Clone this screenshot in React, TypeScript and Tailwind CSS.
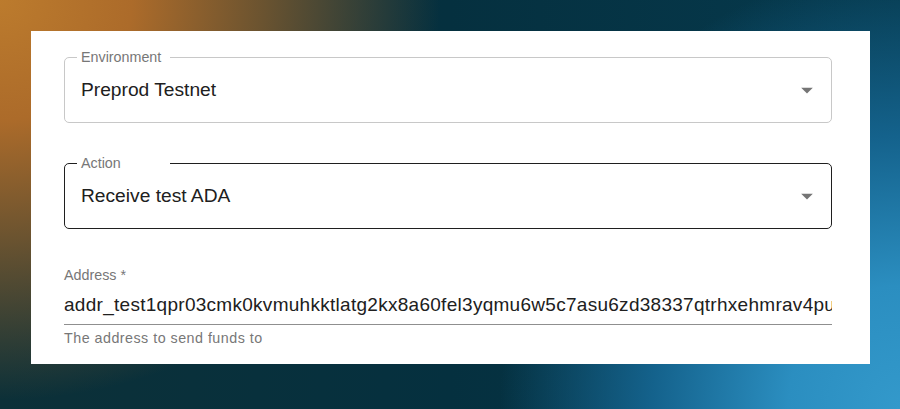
import { type ReactNode } from 'react'

const font = "font-['Liberation_Sans',Arial,sans-serif]"

function ArrowDrop() {
  return (
    <svg viewBox="0 0 24 24" className="h-[28px] w-[28px] shrink-0 fill-[#757575]">
      <path d="M7 10l5 5 5-5z" />
    </svg>
  )
}

function OutlinedSelect({ label, value, active, className }: { label: string; value: string; active?: boolean; className?: string }) {
  return (
    <div
      className={`relative flex h-[66px] items-center justify-between rounded-[5px] border pl-[16px] pr-[10px] ${
        active ? 'border-[#1f1f1f]' : 'border-[#c8c8c8]'
      } ${className ?? ''}`}
    >
      <span className="absolute -top-[9px] left-[12px] h-[17px] w-[93px] bg-white pl-[4px] text-[14.3px] leading-[17px] text-[#777]">
        {label}
      </span>
      <span className="text-[19.2px] text-[#202020]">{value}</span>
      <ArrowDrop />
    </div>
  )
}

function Helper({ children }: { children: ReactNode }) {
  return <p className="mt-[5px] text-[14.3px] leading-[17px] tracking-[0.48px] text-[#777]">{children}</p>
}

export default function App() {
  return (
    <div
      className={`h-[409px] w-[900px] overflow-hidden pl-[31px] pt-[31px] ${font} [background:radial-gradient(ellipse_440px_400px_at_0_0,#bc7b2d_0%,#ac6b2a_30%,#6a5330_60%,rgba(5,48,63,0)_100%),radial-gradient(ellipse_400px_440px_at_100%_100%,#3399cb_0%,#2b8ec0_28%,#14628c_62%,rgba(5,48,63,0)_100%),linear-gradient(90deg,#0c3038_0%,#05303f_50%,#063a4e_100%)]`}
    >
      <div className="h-[333px] w-[839px] bg-white pl-[33px] pt-[26px]">
        <div className="w-[768px]">
          <OutlinedSelect label="Environment" value="Preprod Testnet" />
          <OutlinedSelect label="Action" value="Receive test ADA" active className="mt-[40px]" />

          <div className="mt-[38px]">
            <label className="block text-[14.3px] leading-[17px] text-[#777]">Address *</label>
            <div className="overflow-hidden whitespace-nowrap border-b border-[#8f8f8f] pb-[8px] pt-[9px] text-[19px] leading-[23px] tracking-[0.28px] text-[#202020]">
              addr_test1qpr03cmk0kvmuhkktlatg2kx8a60fel3yqmu6w5c7asu6zd38337qtrhxehmrav4pu7x2kq9
            </div>
            <Helper>The address to send funds to</Helper>
          </div>
        </div>
      </div>
    </div>
  )
}
